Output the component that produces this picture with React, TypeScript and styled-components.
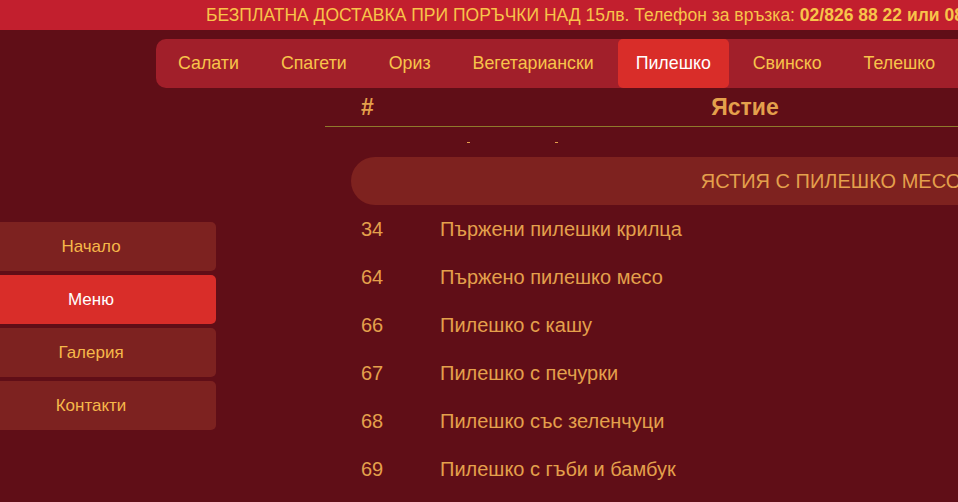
import React from "react";
import styled, { createGlobalStyle } from "styled-components";

const Global = createGlobalStyle`
  html, body { margin: 0; padding: 0; }
  body {
    background: #600e17;
    font-family: "Liberation Sans", Arial, sans-serif;
    overflow: hidden;
  }
`;

const Page = styled.div`
  width: 1400px;
  min-height: 502px;
  background: #600e17;
`;

const TopBar = styled.div`
  height: 30px;
  background: #c21f2e;
  color: #f8c44a;
  font-size: 17.5px;
  line-height: 30px;
  white-space: nowrap;
  padding-left: 206px;
  b { font-weight: bold; }
`;

const NavRow = styled.div`
  display: flex;
  padding: 9px 0 0 156px;
`;

const Nav = styled.nav`
  display: flex;
  gap: 6px;
  padding: 0 4px;
  height: 49px;
  background: #a11f2a;
  border-radius: 10px 0 0 10px;
  flex: 1;
`;

const NavItem = styled.a<{ $active?: boolean }>`
  display: flex;
  align-items: center;
  padding: 0 18px;
  font-size: 17.8px;
  color: ${(p) => (p.$active ? "#ffffff" : "#f8c44a")};
  background: ${(p) => (p.$active ? "#d92d29" : "transparent")};
  border-radius: 5px;
  white-space: nowrap;
  text-decoration: none;
`;

const Body = styled.div`
  display: flex;
  align-items: flex-start;
`;

const Sidebar = styled.aside`
  width: 250px;
  margin-left: -34px;
  margin-right: 109px;
  padding-top: 134px;
  display: flex;
  flex-direction: column;
  gap: 4px;
`;

const SideItem = styled.a<{ $active?: boolean }>`
  height: 49px;
  display: flex;
  align-items: center;
  justify-content: center;
  border-radius: 5px;
  font-size: 17px;
  color: ${(p) => (p.$active ? "#ffffff" : "#f6b84a")};
  background: ${(p) => (p.$active ? "#d92d29" : "#7d2220")};
  text-decoration: none;
`;

const Main = styled.main`
  width: 1012px;
  flex-shrink: 0;
`;

const HeadRow = styled.div`
  display: grid;
  grid-template-columns: 115px 610px 1fr;
  height: 38px;
  align-items: center;
  border-bottom: 1px solid #8f7a2c;
  color: #e4a04c;
  font-weight: bold;
  font-size: 23px;
`;

const HeadCell = styled.div<{ $center?: boolean }>`
  padding-left: ${(p) => (p.$center ? "0" : "36px")};
  text-align: ${(p) => (p.$center ? "center" : "left")};
`;

const Spacer = styled.div`
  height: 30px;
  display: flex;
  align-items: center;
  padding-left: 142px;
  gap: 85px;
`;

const Tick = styled.span`
  width: 3px;
  height: 1px;
  background: #e4a04c;
`;

const Category = styled.div`
  margin: 0 26px;
  height: 48px;
  border-radius: 24px;
  background: #7e221f;
  color: #e4a04c;
  display: flex;
  align-items: center;
  justify-content: center;
  font-size: 20px;
`;

const Row = styled.div`
  display: grid;
  grid-template-columns: 115px 1fr;
  height: 48px;
  align-items: center;
  font-size: 20px;
  color: #e4a04c;
`;

const Num = styled.div`
  padding-left: 36px;
`;

const items = [
  ["34", "Пържени пилешки крилца"],
  ["64", "Пържено пилешко месо"],
  ["66", "Пилешко с кашу"],
  ["67", "Пилешко с печурки"],
  ["68", "Пилешко със зеленчуци"],
  ["69", "Пилешко с гъби и бамбук"],
];

const navItems = ["Салати", "Спагети", "Ориз", "Вегетариански", "Пилешко", "Свинско", "Телешко"];

export default function App() {
  return (
    <Page>
      <Global />
      <TopBar>
        БЕЗПЛАТНА ДОСТАВКА ПРИ ПОРЪЧКИ НАД 15лв. Телефон за връзка: <b>02/826 88 22 или 08</b>
      </TopBar>
      <NavRow>
        <Nav>
          {navItems.map((n) => (
            <NavItem key={n} $active={n === "Пилешко"}>{n}</NavItem>
          ))}
        </Nav>
      </NavRow>
      <Body>
        <Sidebar>
          <SideItem>Начало</SideItem>
          <SideItem $active>Меню</SideItem>
          <SideItem>Галерия</SideItem>
          <SideItem>Контакти</SideItem>
        </Sidebar>
        <Main>
          <HeadRow>
            <HeadCell>#</HeadCell>
            <HeadCell $center>Ястие</HeadCell>
            <HeadCell $center />
          </HeadRow>
          <Spacer>
            <Tick />
            <Tick />
          </Spacer>
          <Category>ЯСТИЯ С ПИЛЕШКО МЕСО</Category>
          {items.map(([n, t]) => (
            <Row key={n}>
              <Num>{n}</Num>
              <div>{t}</div>
            </Row>
          ))}
        </Main>
      </Body>
    </Page>
  );
}
